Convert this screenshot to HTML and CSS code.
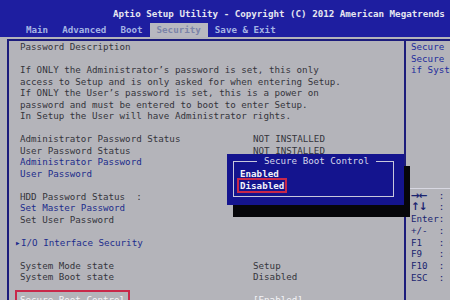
FILE: index.html
```html
<!DOCTYPE html>
<html lang="en">
<head>
    <meta charset="UTF-8">
    <title>Aptio Setup Utility</title>
    <link rel="stylesheet" href="styles.css">
</head>
<body>
    <div class="screen">
        <div class="topbar">
            <div class="title">Aptio Setup Utility - Copyright (C) 2012 American Megatrends</div>
            <div class="tabs">
                <span class="tab">Main</span>
                <span class="tab">Advanced</span>
                <span class="tab">Boot</span>
                <span class="tab active">Security</span>
                <span class="tab">Save &amp; Exit</span>
            </div>
        </div>

        <div class="frame">
            <div class="panel">
                <div class="row"><span>Password Description</span></div>
                <div class="row"></div>
                <div class="row"><span>If ONLY the Administrator’s password is set, this only</span></div>
                <div class="row"><span>access to Setup and is only asked for when entering Setup.</span></div>
                <div class="row"><span>If ONLY the User’s password is set, this is a power on</span></div>
                <div class="row"><span>password and must be entered to boot to enter Setup.</span></div>
                <div class="row"><span>In Setup the User will have Administrator rights.</span></div>
                <div class="row"></div>
                <div class="row"><span class="label">Administrator Password Status</span><span>NOT INSTALLED</span></div>
                <div class="row"><span class="label">User Password Status</span><span>NOT INSTALLED</span></div>
                <div class="row link"><span>Administrator Password</span></div>
                <div class="row link"><span>User Password</span></div>
                <div class="row"></div>
                <div class="row"><span>HDD Password Status  :</span></div>
                <div class="row link"><span>Set Master Password</span></div>
                <div class="row"><span>Set User Password</span></div>
                <div class="row"></div>
                <div class="row link sub"><span>I/O Interface Security</span></div>
                <div class="row"></div>
                <div class="row"><span class="label">System Mode state</span><span>Setup</span></div>
                <div class="row"><span class="label">System Boot state</span><span>Disabled</span></div>
                <div class="row"></div>
                <div class="row selected"><span class="label"><span class="mark">Secure Boot Control</span></span><span>[Enabled]</span></div>
            </div>

            <div class="help">
                <div class="row">Secure Boot flow control.</div>
                <div class="row">Secure Boot is possible only</div>
                <div class="row">if System running in User Mode</div>

                <div class="keys">
                    <div class="key-row"><span class="key"><span class="arrows">→←</span></span>: Select Screen</div>
                    <div class="key-row"><span class="key"><span class="arrows">↑↓</span></span>: Select Item</div>
                    <div class="key-row"><span class="key">Enter</span>: Select</div>
                    <div class="key-row"><span class="key">+/-</span>: Change Opt.</div>
                    <div class="key-row"><span class="key">F1</span>: General Help</div>
                    <div class="key-row"><span class="key">F9</span>: Optimized Defaults</div>
                    <div class="key-row"><span class="key">F10</span>: Save &amp; Exit</div>
                    <div class="key-row"><span class="key">ESC</span>: Exit</div>
                </div>
            </div>
        </div>

        <!-- option popup over the page -->
        <div class="popup">
            <div class="popup-box">
                <div class="popup-title">Secure Boot Control</div>
                <div class="option first">Enabled</div>
                <div class="option"><span class="mark">Disabled</span></div>
            </div>
        </div>
    </div>
</body>
</html>
```

FILE: styles.css
```css
* { margin: 0; padding: 0; box-sizing: border-box; }
body {
    width: 450px;
    height: 300px;
    overflow: hidden;
    background: #b4b4ba;
    font-family: "DejaVu Sans Mono", "Liberation Mono", monospace;
    font-size: 9.2px;
    line-height: 11.5px;
    color: #34343c;
}
.screen { position: relative; height: 300px; }

.topbar { background: #1e1ea0; height: 37px; }
.title {
    height: 23px;
    padding: 8px 0 0 113px;
    color: #e6e6f0;
    font-weight: bold;
    white-space: nowrap;
}
.tabs { display: flex; height: 14px; padding-left: 19px; }
.tab {
    padding: 0 7px;
    line-height: 14px;
    color: #a4b4e4;
    font-weight: bold;
    white-space: nowrap;
}
.tab.active { background: #b8b8c0; color: #7c84a8; }

.frame {
    display: grid;
    grid-template-columns: 395px 1fr;
    height: 263px;
    margin: 2px 0 0 7px;
    border-top: 2px solid #1c1c7c;
    border-left: 2px solid #1c1c7c;
}
.panel { padding-left: 11px; }
.row { display: flex; height: 11.5px; white-space: pre; }
.row .label { width: 233px; }
.link { color: #1c2c8c; }
.sub::before {
    content: "▸";
    display: inline-block;
    width: 6px;
    margin-left: -5px;
    color: #1c2c8c;
}
.selected { color: #f4f4f8; }
.mark {
    display: inline-block;
    padding: 2px 3px;
    margin: -2px -3px;
    outline: 2px solid #c8284a;
}

.help {
    border-left: 2px solid #1c1c7c;
    padding-left: 5px;
    color: #1e2c9c;
    white-space: nowrap;
    overflow: hidden;
}
.keys {
    margin: 112px 0 0 -5px;
    padding: 1px 0 0 5px;
    border-top: 1px solid #d8d8e2;
    color: #1a2470;
}
.key-row { height: 11.8px; line-height: 11.8px; }
.key { display: inline-block; width: 5ch; }
.arrows {
    font-family: "DejaVu Sans", sans-serif;
    font-size: 10.5px;
    font-weight: bold;
    letter-spacing: -1px;
}

.popup {
    position: absolute;
    left: 227px;
    top: 154px;
    width: 177px;
    height: 51px;
    padding: 7px 10px 8px 6px;
    background: #14148e;
    box-shadow: 6px 12px 0 #06060a;
}
.popup-box {
    height: 36px;
    border: 1px solid #c8c8dc;
    padding-left: 6px;
}
.popup-title {
    display: table;
    margin: -7.5px auto 0;
    padding: 0 7px;
    background: #14148e;
    color: #d4d4ea;
}
.option {
    color: #f2f2f8;
    font-weight: bold;
}
.option.first { margin-top: 2px; }
.option .mark { padding: 0 1px; margin: 0 -1px; }
```
